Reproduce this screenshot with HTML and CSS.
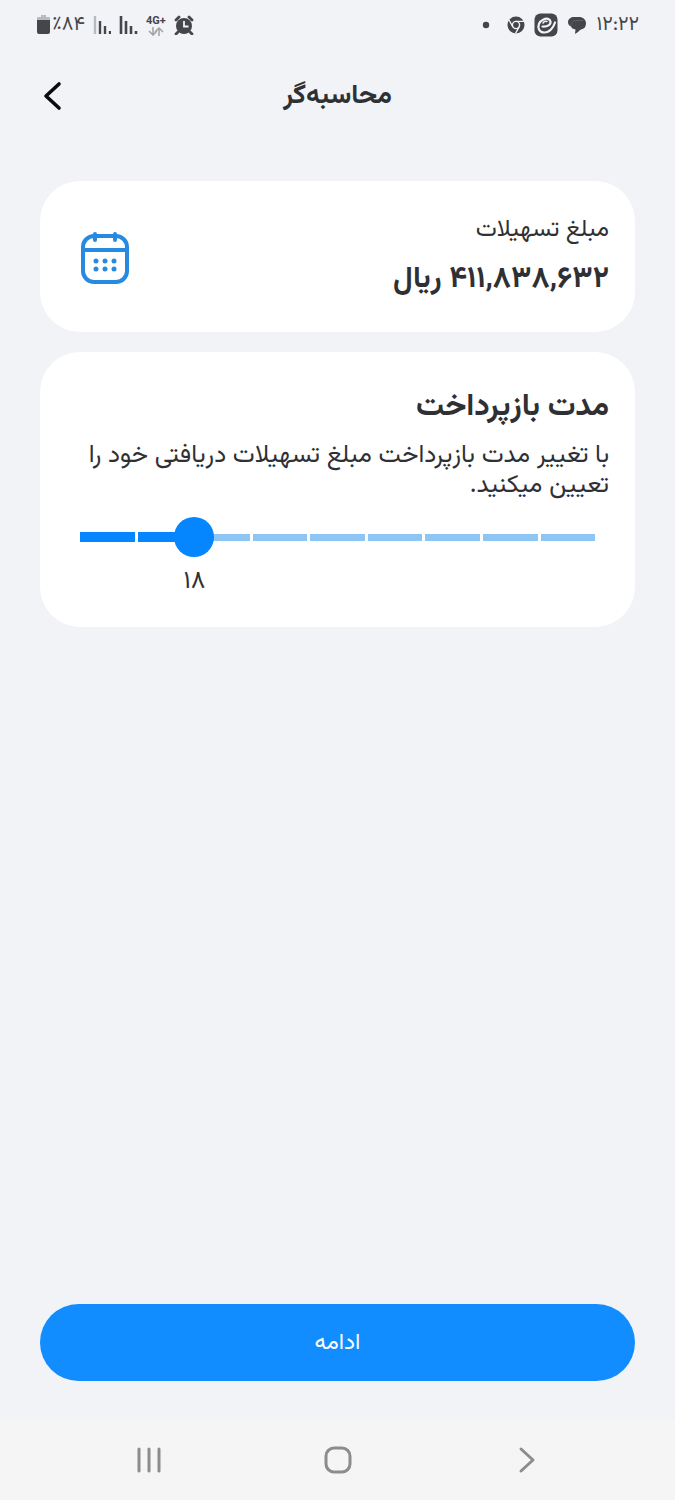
FILE: index.html
```html
<!DOCTYPE html>
<html lang="fa" dir="rtl">

<head>
    <meta charset="utf-8">
    <meta name="viewport" content="width=device-width, initial-scale=1">
    <title>محاسبه‌گر</title>
    <link rel="stylesheet" href="styles.css">
    <script>
        function updateSlider() {
            let range = document.querySelector('.range');
            let value = +range.value;
            let step = value / 6 - 1;
            let parts = document.querySelectorAll('.track span');
            for (let i = 0; i < parts.length; i++) {
                parts[i].className = i < step ? 'on' : '';
            }
            let out = document.querySelector('.months');
            out.innerText = value.toLocaleString('fa-IR');
            out.style.setProperty('--step', step);
        }
    </script>
</head>

<body>
    <div class="status" dir="ltr">
        <div class="status-side">
            <svg width="15" height="22" viewBox="0 0 15 22">
                <path d="M5 1h5v2h3a1 1 0 0 1 1 1v4H1V4a1 1 0 0 1 1-1h3z" fill="#b9babf" />
                <path d="M1 6h13v12a2 2 0 0 1-2 2H3a2 2 0 0 1-2-2z" fill="#45464b" />
            </svg>
            <span class="battery">٪۸۴</span>
            <svg width="18" height="20" viewBox="0 0 18 20">
                <path d="M2 1v18" stroke="#b9babf" stroke-width="2.4" />
                <path d="M7 6v13M12 11v8M17 16v3" stroke="#45464b" stroke-width="2.4" />
            </svg>
            <svg width="19" height="20" viewBox="0 0 19 20">
                <path d="M2 1v18M7 6v13M12 11v8M17 16v3" stroke="#45464b" stroke-width="2.6" />
            </svg>
            <div class="network">
                <span>4G+</span>
                <svg width="16" height="9" viewBox="0 0 16 9" fill="none" stroke="#a0a1a6" stroke-width="1.5">
                    <path d="M5 0v8M1 4l4 4 4-4M11 9V1M7 5l4-4 4 4" />
                </svg>
            </div>
            <svg width="20" height="20" viewBox="0 0 20 20">
                <circle cx="10" cy="11" r="8" fill="#45464b" />
                <path d="M2 5l3-3M18 5l-3-3M4 17l-2 2M16 17l2 2" stroke="#45464b" stroke-width="2.8" stroke-linecap="round" />
                <path d="M10 6v5.500h4.500" fill="none" stroke="#f1f3f7" stroke-width="1.800" />
            </svg>
        </div>
        <div class="status-side notices">
            <svg class="dot" width="8" height="8" viewBox="0 0 8 8"><circle cx="4" cy="4" r="3.200" fill="#45464b" /></svg>
            <svg width="18" height="18" viewBox="0 0 18 18">
                <circle cx="9" cy="9" r="8.500" fill="#45464b" />
                <circle cx="9" cy="9" r="3.600" fill="none" stroke="#f1f3f7" stroke-width="1.400" />
                <path d="M9 5.400h8M5.900 10.800L2 4M12.100 10.800L8.500 17.500" stroke="#f1f3f7" stroke-width="1.400" />
            </svg>
            <svg width="24" height="24" viewBox="0 0 24 24">
                <rect x="0.500" y="0.500" width="23" height="23" rx="6" fill="#45464b" />
                <path d="M8.500 13.500c5 .5 8.500-2 8-5-.5-2.800-4-3.600-7-2C5 8.500 3.500 13 5 16.500c2 4 8 4 12 0 2-2 3-4 4-7" fill="none" stroke="#f1f3f7" stroke-width="2.200" stroke-linecap="round" />
                <path d="M9 10c1-1.500 3-2 4-1.500" fill="none" stroke="#f1f3f7" stroke-width="1.500" stroke-linecap="round" />
            </svg>
            <svg width="20" height="20" viewBox="0 0 20 20">
                <path d="M7 2h5c4 0 7 2.500 7 6.500 0 3.500-2 5.500-5 6-1.500.5-3 3-6 4.500l.5-4.500C6 14 4.500 13 4 11.500 2 10.500 1 9 1 7c0-3 3-5 6-5z" fill="#45464b" />
                <path d="M4 11c0-4 2.500-5.500 6-5.500h6" fill="none" stroke="#66676c" stroke-width="0.800" />
            </svg>
            <span class="clock">۱۲:۲۲</span>
        </div>
    </div>

    <header class="header">
        <h1>محاسبه‌گر</h1>
        <button class="back" aria-label="بازگشت">
            <svg width="20" height="32" viewBox="0 0 20 32" fill="none" stroke="#0b0b0c" stroke-width="3.600" stroke-linecap="round" stroke-linejoin="round">
                <path d="M17 4L4 16l13 12" />
            </svg>
        </button>
    </header>

    <main class="content">
        <section class="card amount">
            <div>
                <p class="label">مبلغ تسهیلات</p>
                <p class="value">۴۱۱,۸۳۸,۶۳۲ ریال</p>
            </div>
            <svg width="50" height="54" viewBox="0 0 50 54" fill="none" stroke="#268be0" stroke-width="4">
                <rect x="3" y="4" width="44" height="46" rx="11" />
                <path d="M3 18h44" />
                <path d="M15 2v6M35 2v6" stroke-linecap="round" />
                <g fill="#268be0" stroke="none">
                    <circle cx="16" cy="29" r="2.500" /><circle cx="25" cy="29" r="2.500" /><circle cx="34" cy="29" r="2.500" />
                    <circle cx="16" cy="37" r="2.500" /><circle cx="25" cy="37" r="2.500" /><circle cx="34" cy="37" r="2.500" />
                </g>
            </svg>
        </section>

        <section class="card period">
            <h2><label for="months">مدت بازپرداخت</label></h2>
            <p class="hint">با تغییر مدت بازپرداخت مبلغ تسهیلات دریافتی خود را تعیین میکنید.</p>
            <div class="slider" dir="ltr">
                <div class="track">
                    <span class="on"></span><span class="on"></span><span></span>
                    <span></span><span></span><span></span>
                    <span></span><span></span><span></span>
                </div>
                <input class="range" id="months" type="range" min="6" max="60" step="6" value="18" oninput="updateSlider()">
                <output class="months" for="months" style="--step: 2">۱۸</output>
            </div>
        </section>
    </main>

    <button class="next">ادامه</button>

    <nav class="nav" dir="ltr">
        <button aria-label="برنامه‌ها">
            <svg width="28" height="28" viewBox="0 0 28 28" stroke="#8c8c8c" stroke-width="3" stroke-linecap="round">
                <path d="M4 3v22M14 3v22M24 3v22" />
            </svg>
        </button>
        <button aria-label="خانه">
            <svg width="28" height="28" viewBox="0 0 28 28" fill="none" stroke="#8c8c8c" stroke-width="3">
                <rect x="2" y="2" width="24" height="24" rx="8" />
            </svg>
        </button>
        <button aria-label="قبلی">
            <svg width="28" height="28" viewBox="0 0 28 28" fill="none" stroke="#8c8c8c" stroke-width="3" stroke-linecap="round" stroke-linejoin="round">
                <path d="M9 3l12 11L9 25" />
            </svg>
        </button>
    </nav>
</body>

</html>
```
FILE: styles.css
```css
* {
    box-sizing: border-box;
}

body {
    display: flex;
    flex-direction: column;
    min-height: 100vh;
    margin: 0;
    background-color: #f1f3f7;
    color: #2f3033;
    font-family: "Vazirmatn", "Noto Sans Arabic", "DejaVu Sans", sans-serif;
}

h1,
h2,
p {
    margin: 0;
}

button {
    padding: 0;
    border: none;
    background: none;
    font-family: inherit;
    cursor: pointer;
}

svg {
    display: block;
    flex-shrink: 0;
}

.status {
    display: flex;
    justify-content: space-between;
    align-items: center;
    height: 50px;
    padding: 0 36px;
    color: #45464b;
}

.status-side {
    display: flex;
    align-items: center;
    gap: 8px;
}

.notices {
    gap: 9px;
}

.battery,
.clock {
    font-size: 20px;
}

.battery {
    margin-left: -7px;
}

.dot {
    margin-right: 8px;
}

.network {
    display: flex;
    flex-direction: column;
    align-items: center;
    font: bold 11px/12px Roboto, sans-serif;
}

.header {
    display: grid;
    grid-template-columns: 40px 1fr 40px;
    align-items: center;
    height: 92px;
    padding: 0 32px;
}

.header h1 {
    grid-column: 2;
    text-align: center;
    font-size: 27px;
}

.back {
    display: flex;
    justify-content: center;
}

.content {
    display: flex;
    flex-direction: column;
    gap: 20px;
    flex: 1;
    padding: 39px 40px;
}

.card {
    padding: 34px 26px 20px 40px;
    border-radius: 40px;
    background-color: white;
}

.amount {
    display: flex;
    justify-content: space-between;
    align-items: center;
    padding-bottom: 30px;
}

.label {
    font-size: 24px;
    line-height: 30px;
}

.value {
    margin-top: 12px;
    font-size: 30px;
    line-height: 45px;
    font-weight: bold;
}

.period h2 {
    font-size: 31px;
    line-height: 44px;
}

.hint {
    margin-top: 11px;
    font-size: 25px;
    line-height: 30px;
}

.slider {
    display: grid;
    align-items: center;
    margin-top: 16px;
    padding-right: 14px;
}

.track,
.range {
    grid-area: 1 / 1;
}

.track {
    display: flex;
    align-items: center;
    gap: 3px;
}

.track span {
    flex: 1;
    height: 7px;
    background-color: #8dc6f5;
}

.track .on {
    height: 10px;
    background-color: #0586ff;
}

/* wider than the track by half a thumb on each side */
.range {
    width: auto;
    height: 40px;
    margin: 0 -20px;
    background: none;
    appearance: none;
    -webkit-appearance: none;
}

.range::-webkit-slider-thumb {
    width: 40px;
    height: 40px;
    border-radius: 50%;
    background-color: #0586ff;
    appearance: none;
    -webkit-appearance: none;
}

.months {
    width: 60px;
    margin-left: calc(100% * var(--step) / 9 - 30px);
    text-align: center;
    font-size: 25px;
    line-height: 50px;
}

.next {
    height: 77px;
    margin: 0 40px 39px;
    border-radius: 40px;
    background-color: #118dff;
    color: white;
    font-size: 23px;
}

.nav {
    display: flex;
    justify-content: space-between;
    align-items: center;
    height: 80px;
    padding: 0 20%;
    background-color: #f5f5f5;
}
```
